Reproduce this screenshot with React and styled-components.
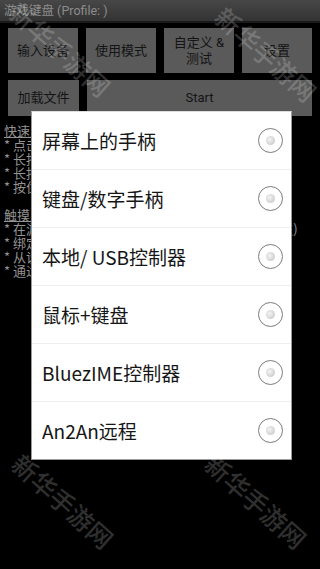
import React from "react";
import styled, { createGlobalStyle } from "styled-components";

const GlobalStyle = createGlobalStyle`
  html, body {
    margin: 0;
    padding: 0;
    background: #000;
  }
  body {
    font-family: "Noto Sans CJK SC", "Noto Sans", "Liberation Sans", sans-serif;
  }
`;

const Page = styled.div`
  position: relative;
  width: 320px;
  height: 569px;
  overflow: hidden;
  background: #000;
`;

const TitleBar = styled.div`
  height: 21px;
  padding-left: 4px;
  background: linear-gradient(#474747, #333);
  color: #8c8c8c;
  font-family: Roboto, "Noto Sans CJK SC", sans-serif;
  font-size: 12.5px;
  line-height: 21px;
  border-bottom: 2px solid #1a1a1a;
`;

const ButtonGrid = styled.div`
  display: grid;
  grid-template-columns: ${(p) => p.cols};
  gap: 8px;
  padding: 0 8px;
  margin-top: ${(p) => p.top}px;
`;

const Btn = styled.div`
  height: ${(p) => p.h}px;
  background: #5a5a5a;
  color: #141414;
  font-family: Roboto, "Noto Sans CJK SC", sans-serif;
  font-size: 13px;
  line-height: 16px;
  display: flex;
  align-items: center;
  justify-content: center;
  text-align: center;
  white-space: pre-line;
`;

const Help = styled.div`
  padding: 8px 0 0 4px;
  color: #939393;
  font-size: 13px;
  line-height: 14px;
  white-space: nowrap;
`;

const HelpHead = styled.div`
  text-decoration: underline;
  margin-top: ${(p) => (p.gap ? 14 : 0)}px;
`;

const Dialog = styled.div`
  position: absolute;
  left: 31px;
  top: 111px;
  width: 259px;
  background: #fff;
  border: 1px solid #9a9a9a;
  border-top-color: #ddd;
`;

const Option = styled.div`
  height: 57px;
  display: flex;
  align-items: center;
  justify-content: space-between;
  padding: 0 5px 0 10px;
  border-top: ${(p) => (p.first ? "none" : "1px solid #efefef")};
  color: #161616;
  font-size: 19px;
`;

const Radio = styled.span`
  width: 23px;
  height: 23px;
  border-radius: 50%;
  border: 1.5px solid #7c7c7c;
  display: flex;
  align-items: center;
  justify-content: center;
  margin-right: 3px;

  &::after {
    content: "";
    width: 9px;
    height: 9px;
    border-radius: 50%;
    background: radial-gradient(circle at 40% 40%, #f4f4f4, #c0c0c0);
  }
`;

const Watermark = styled.div`
  position: absolute;
  left: ${(p) => p.x}px;
  top: ${(p) => p.y}px;
  transform: rotate(42deg);
  transform-origin: 0 0;
  color: rgba(255, 255, 255, 0.2);
  font-size: 25px;
  line-height: 1;
  font-weight: 500;
  white-space: nowrap;
  pointer-events: none;
`;

const options = [
  "屏幕上的手柄",
  "键盘/数字手柄",
  "本地/ USB控制器",
  "鼠标+键盘",
  "BluezIME控制器",
  "An2An远程",
];

export default function App() {
  return (
    <Page>
      <GlobalStyle />
      <TitleBar>游戏键盘 (Profile: )</TitleBar>
      <ButtonGrid cols="repeat(4, 1fr)" top={5}>
        <Btn h={45}>输入设备</Btn>
        <Btn h={45}>使用模式</Btn>
        <Btn h={45}>{"自定义 &\n测试"}</Btn>
        <Btn h={45}>设置</Btn>
      </ButtonGrid>
      <ButtonGrid cols="71px 1fr" top={7}>
        <Btn h={36}>加载文件</Btn>
        <Btn h={36}>Start</Btn>
      </ButtonGrid>
      <Help>
        <HelpHead>快速入门</HelpHead>
        <div>* 点击输入设备选择控制方式</div>
        <div>* 长按按键进行编辑</div>
        <div>* 长按屏幕空白处添加按键</div>
        <div>* 按住菜单键打开设置</div>
        <HelpHead gap>触摸屏幕</HelpHead>
        <div>* 在游戏中双击屏幕可以隐藏或显示按键 (长按两点)</div>
        <div>* 绑定按键到屏幕上的位置</div>
        <div>* 从设置中导入配置文件</div>
        <div>* 通过蓝牙连接控制器</div>
      </Help>

      <Dialog>
        {options.map((o, i) => (
          <Option key={o} first={i === 0}>
            <span>{o}</span>
            <Radio />
          </Option>
        ))}
      </Dialog>

      <Watermark x={22} y={-2}>新华手游网</Watermark>
      <Watermark x={228} y={3}>新华手游网</Watermark>
      <Watermark x={25} y={450}>新华手游网</Watermark>
      <Watermark x={218} y={450}>新华手游网</Watermark>
    </Page>
  );
}
